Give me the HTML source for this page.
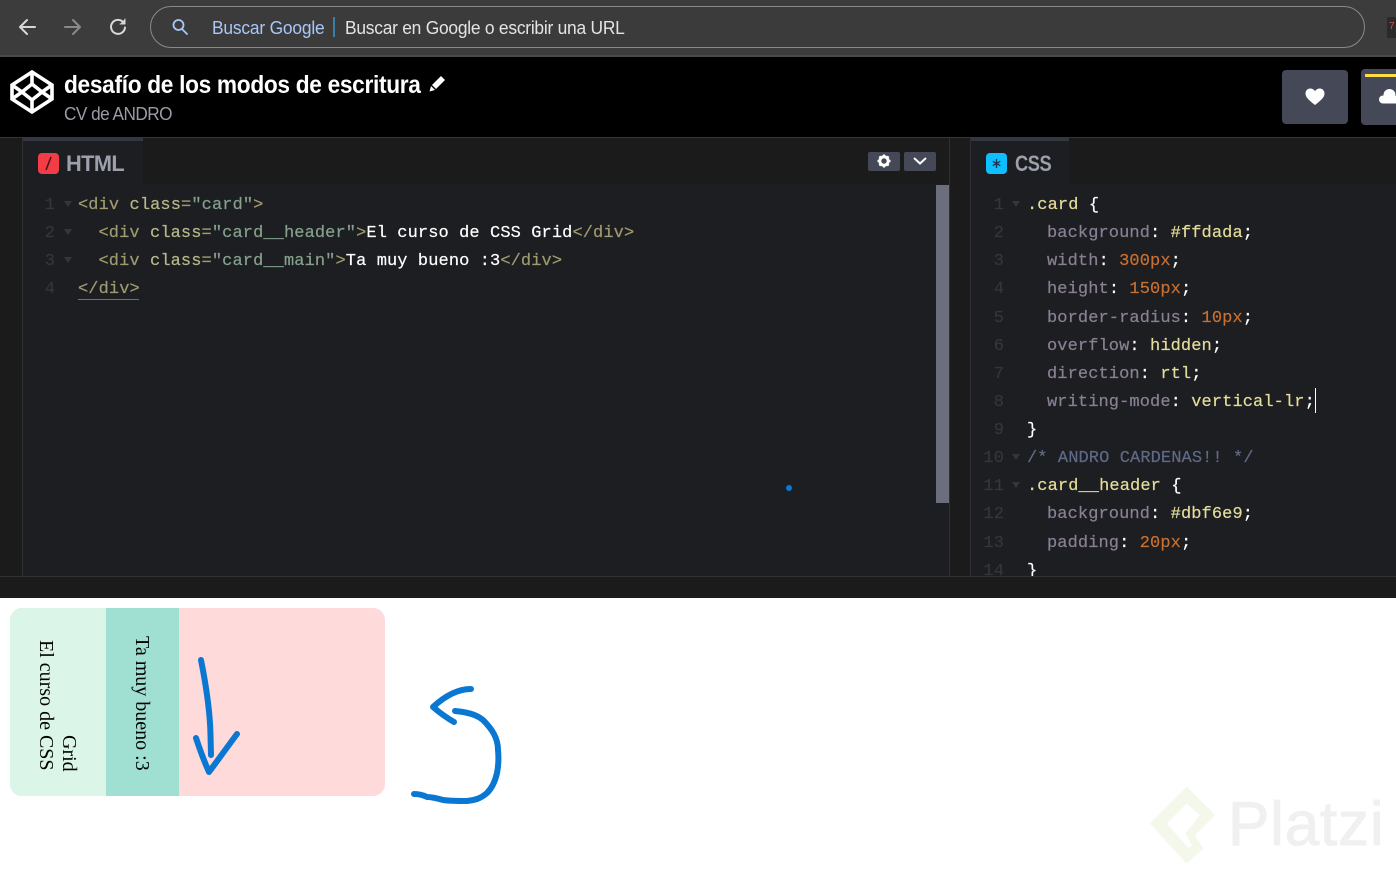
<!DOCTYPE html>
<html><head><meta charset="utf-8"><style>
*{box-sizing:border-box}
html,body{margin:0;padding:0;width:1396px;height:873px;overflow:hidden;background:#fff}
.a{position:absolute}
.t{position:absolute;white-space:pre;font-family:"Liberation Sans",sans-serif;transform-origin:left center}
.c{position:absolute;white-space:pre;font-family:"Liberation Mono",monospace;font-size:17px;line-height:20px;color:#fff;letter-spacing:.1px;-webkit-text-stroke:.2px}
.n{color:#34363c;text-align:right;width:30px}
.f{position:absolute;width:0;height:0;border-left:4px solid transparent;border-right:4px solid transparent;border-top:6px solid #34363c}
.s{position:absolute;white-space:pre;writing-mode:vertical-lr;font-family:'Liberation Serif',serif;font-size:20px;line-height:23px;color:#000}
.g{color:#9f9a6f}.o{color:#b8b88a}.q{color:#85a08c}.u{color:#8a8094}.y{color:#e4dc9a}.r{color:#c9702f}.m{color:#5f6a88}
</style></head><body>
<div class="a" style="left:0;top:0;width:1396px;height:56px;background:#3c3c3c"></div>
<div class="a" style="left:0;top:55px;width:1396px;height:2px;background:#4a4a4a"></div>
<svg class="a" style="left:0;top:0" width="140" height="56" fill="none" stroke-linecap="round" stroke-linejoin="round"><path d="M35 27H21M27 20l-7 7 7 7" stroke="#d8d8d8" stroke-width="2"/><path d="M65 27h14M73 20l7 7-7 7" stroke="#8a8a8a" stroke-width="2"/><path d="M123.500 22.500a7 7 0 1 0 1.500 5" stroke="#d8d8d8" stroke-width="2"/><path d="M125 19v5h-5" fill="#d8d8d8" stroke="#d8d8d8" stroke-width="1"/></svg>
<div class="a" style="left:150px;top:6px;width:1215px;height:42px;border:1.500px solid #8a8a8a;border-radius:21px;background:#3b3b3b"></div>
<svg class="a" style="left:170px;top:17px" width="20" height="20" fill="none" stroke="#a8c7fa" stroke-width="1.800"><circle cx="8.500" cy="8" r="5"/><path d="M12 12l5.500 5.500"/></svg>
<div class="t" style="left:212px;top:17px;font-size:18px;line-height:22px;color:#a8c7fa;letter-spacing:-.2px;transform:scaleX(.966)">Buscar Google</div>
<div class="a" style="left:333px;top:17px;width:1.500px;height:20px;background:#3b7ea8"></div>
<div class="t" style="left:345px;top:17px;font-size:18px;line-height:22px;color:#e4e4e4;letter-spacing:-.25px;transform:scaleX(.966)">Buscar en Google o escribir una URL</div>
<div class="a" style="left:1387px;top:17px;width:9px;height:21px;background:#2a2a2a"></div>
<div class="t" style="left:1389px;top:21px;font-size:10px;line-height:12px;color:#d05050">7</div>

<div class="a" style="left:0;top:57px;width:1396px;height:80px;background:#000"></div>
<svg class="a" style="left:9px;top:69px" width="46" height="46" fill="none" stroke="#fff" stroke-width="3.600" stroke-linejoin="miter"><path d="M23 3 43 16V30L23 43 3 30V16Z"/><path d="M23 3V15L33 23 23 31V43M3 16 13 23 23 15M43 16 33 23M3 30 13 23 23 31M43 30 33 23"/></svg>
<div class="t" style="left:64px;top:70px;font-size:25px;line-height:30px;font-weight:700;color:#fff;letter-spacing:-.35px;transform:scaleX(.908)">desafío de los modos de escritura</div>
<svg class="a" style="left:427px;top:74px" width="20" height="20"><path d="M14 2l4 4-9 9-4-4zM4 12l4 4-5.500 1.500z" fill="#fff"/></svg>
<div class="t" style="left:64px;top:103px;font-size:18px;line-height:22px;color:#9a9ca5;letter-spacing:-.55px;transform:scaleX(.956)">CV de ANDRO</div>
<div class="a" style="left:1282px;top:70px;width:66px;height:54px;background:#444857;border-radius:4px"></div>
<svg class="a" style="left:1304px;top:87px" width="22" height="20"><path d="M11 18C4 12.500 1.500 10 1.500 6.500 1.500 3.500 3.700 1.500 6.200 1.500 8.200 1.500 10 2.500 11 4.200 12 2.500 13.800 1.500 15.800 1.500 18.300 1.500 20.500 3.500 20.500 6.500 20.500 10 18 12.500 11 18Z" fill="#fff"/></svg>
<div class="a" style="left:1361px;top:69px;width:40px;height:56px;background:#444857;border-radius:4px"></div>
<div class="a" style="left:1365px;top:74px;width:31px;height:3px;background:#ffdd40"></div>
<svg class="a" style="left:1378px;top:87px" width="18" height="18" fill="#fff"><circle cx="5" cy="12.500" r="4"/><circle cx="11.500" cy="8" r="6"/><rect x="5" y="9" width="13" height="7.500"/></svg>

<div class="a" style="left:0;top:137px;width:1396px;height:461px;background:#1d1e22"></div>
<div class="a" style="left:0;top:137px;width:1396px;height:1px;background:#34363c"></div>
<div class="a" style="left:0;top:138px;width:22px;height:438px;background:#1b1b1b"></div>
<div class="a" style="left:22px;top:138px;width:1px;height:438px;background:#2f3034"></div>
<div class="a" style="left:23px;top:138px;width:926px;height:46px;background:#1b1b1c"></div>
<div class="a" style="left:23px;top:138px;width:120px;height:46px;background:#1d1e22"></div>
<div class="a" style="left:23px;top:138px;width:120px;height:3px;background:#343640"></div>
<div class="a" style="left:38px;top:153px;width:21px;height:21px;background:#f33c45;border-radius:4px"></div>
<svg class="a" style="left:38px;top:153px" width="21" height="21"><path d="M8 17 13 4" stroke="#40161a" stroke-width="1.500"/></svg>
<div class="t" style="left:66px;top:150px;font-size:22px;line-height:27px;font-weight:700;color:#9ca0ac;letter-spacing:-.6px;transform:scaleX(.99)">HTML</div>
<div class="a" style="left:868px;top:152px;width:32px;height:19px;background:#444857;border-radius:2px"></div>
<div class="a" style="left:904px;top:152px;width:32px;height:19px;background:#444857;border-radius:2px"></div>
<svg class="a" style="left:876px;top:153px" width="16" height="16"><circle cx="8" cy="8" r="4.200" fill="none" stroke="#fff" stroke-width="3"/><path d="M8 1.500v3M8 11.500v3M1.500 8h3M11.500 8h3M3.400 3.400l2 2M10.600 10.600l2 2M3.400 12.600l2-2M10.600 5.400l2-2" stroke="#fff" stroke-width="2.200"/></svg>
<svg class="a" style="left:911px;top:154px" width="18" height="14" fill="none"><path d="M3 4l6 5.500L15 4" stroke="#fff" stroke-width="2"/></svg>
<div class="a" style="left:936px;top:185px;width:13px;height:318px;background:#6b6e7c"></div>
<div class="a" style="left:949px;top:138px;width:1px;height:438px;background:#2f3034"></div>
<div class="a" style="left:950px;top:138px;width:20px;height:438px;background:#1b1b1b"></div>
<div class="a" style="left:970px;top:138px;width:1px;height:438px;background:#2f3034"></div>
<div class="a" style="left:971px;top:138px;width:425px;height:46px;background:#1b1b1c"></div>
<div class="a" style="left:971px;top:138px;width:98px;height:46px;background:#1d1e22"></div>
<div class="a" style="left:971px;top:138px;width:98px;height:3px;background:#343640"></div>
<div class="a" style="left:986px;top:153px;width:21px;height:21px;background:#0ebeff;border-radius:4px"></div>
<svg class="a" style="left:986px;top:153px" width="21" height="21" stroke="#123a50" stroke-width="1.400"><path d="M10.500 6v9M6.700 8.300l7.600 4.400M6.700 12.700l7.600-4.400"/></svg>
<div class="t" style="left:1015px;top:150px;font-size:22px;line-height:27px;font-weight:700;color:#9ca0ac;letter-spacing:-.5px;transform:scaleX(.83)">CSS</div>
<div class="a" style="left:786px;top:485px;width:6px;height:6px;border-radius:50%;background:#0a78d4"></div>

<div class="c n" style="left:25px;top:196px">1</div><div class="f" style="left:64px;top:201px"></div>
<div class="c n" style="left:25px;top:224px">2</div><div class="f" style="left:64px;top:229px"></div>
<div class="c n" style="left:25px;top:252px">3</div><div class="f" style="left:64px;top:257px"></div>
<div class="c n" style="left:25px;top:280px">4</div>
<div class="c" style="left:78px;top:196px"><span class="g">&lt;div</span> <span class="o">class</span><span class="g">=</span><span class="q">"card"</span><span class="g">&gt;</span></div>
<div class="c" style="left:98.500px;top:224px"><span class="g">&lt;div</span> <span class="o">class</span><span class="g">=</span><span class="q">"card__header"</span><span class="g">&gt;</span>El curso de CSS Grid<span class="g">&lt;/div&gt;</span></div>
<div class="c" style="left:98.500px;top:252px"><span class="g">&lt;div</span> <span class="o">class</span><span class="g">=</span><span class="q">"card__main"</span><span class="g">&gt;</span>Ta muy bueno :3<span class="g">&lt;/div&gt;</span></div>
<div class="c" style="left:78px;top:280px"><span class="g">&lt;/div&gt;</span></div>
<div class="a" style="left:78px;top:299px;width:61px;height:1px;background:#6b6e7c"></div>

<div class="a" style="left:971px;top:184px;width:425px;height:392px;overflow:hidden">
<div class="c n" style="left:3px;top:12px">1</div><div class="f" style="left:41px;top:17px"></div>
<div class="c n" style="left:3px;top:40px">2</div>
<div class="c n" style="left:3px;top:68px">3</div>
<div class="c n" style="left:3px;top:96px">4</div>
<div class="c n" style="left:3px;top:125px">5</div>
<div class="c n" style="left:3px;top:153px">6</div>
<div class="c n" style="left:3px;top:181px">7</div>
<div class="c n" style="left:3px;top:209px">8</div>
<div class="c n" style="left:3px;top:237px">9</div>
<div class="c n" style="left:3px;top:265px">10</div><div class="f" style="left:41px;top:270px"></div>
<div class="c n" style="left:3px;top:293px">11</div><div class="f" style="left:41px;top:298px"></div>
<div class="c n" style="left:3px;top:321px">12</div>
<div class="c n" style="left:3px;top:350px">13</div>
<div class="c n" style="left:3px;top:378px">14</div>
<div class="c" style="left:56px;top:12px"><span class="y">.card</span> {</div>
<div class="c" style="left:76px;top:40px"><span class="u">background</span>: <span class="y">#ffdada</span>;</div>
<div class="c" style="left:76px;top:68px"><span class="u">width</span>: <span class="r">300px</span>;</div>
<div class="c" style="left:76px;top:96px"><span class="u">height</span>: <span class="r">150px</span>;</div>
<div class="c" style="left:76px;top:125px"><span class="u">border-radius</span>: <span class="r">10px</span>;</div>
<div class="c" style="left:76px;top:153px"><span class="u">overflow</span>: <span class="y">hidden</span>;</div>
<div class="c" style="left:76px;top:181px"><span class="u">direction</span>: <span class="y">rtl</span>;</div>
<div class="c" style="left:76px;top:209px"><span class="u">writing-mode</span>: <span class="y">vertical-lr</span>;</div>
<div class="a" style="left:344px;top:204px;width:1px;height:25px;background:#fff"></div>
<div class="c" style="left:56px;top:237px">}</div>
<div class="c m" style="left:56px;top:265px">/* ANDRO CARDENAS!! */</div>
<div class="c" style="left:56px;top:293px"><span class="y">.card__header</span> {</div>
<div class="c" style="left:76px;top:321px"><span class="u">background</span>: <span class="y">#dbf6e9</span>;</div>
<div class="c" style="left:76px;top:350px"><span class="u">padding</span>: <span class="r">20px</span>;</div>
<div class="c" style="left:56px;top:378px">}</div>
</div>

<div class="a" style="left:0;top:576px;width:1396px;height:22px;background:#1b1b1b;border-top:1px solid #2f3034"></div>

<div class="a" style="left:10px;top:608px;width:375px;height:188px;border-radius:12px;overflow:hidden;background:#ffdada">
<div class="a" style="left:0;top:0;width:96px;height:188px;background:#dbf6e9"></div>
<div class="a" style="left:96px;top:0;width:73px;height:188px;background:#a0e0d3"></div>
</div>
<div class="s" style="left:34px;top:640px">El curso de CSS</div>
<div class="s" style="left:57px;top:735px">Grid</div>
<div class="s" style="left:130px;top:636px">Ta muy bueno :3</div>

<svg class="a" style="left:0;top:600px" width="520" height="220" fill="none" stroke="#0a78d2" stroke-width="6" stroke-linecap="round" stroke-linejoin="round">
<path d="M201 60C206 85 210 110 210.500 135L211 155"/>
<path d="M196 138C200 150 204 161 209 172 218 160 228 146 237 134"/>
<path d="M471 89C458 89 446 95 433 107 440 113 447 118 454 122"/>
<path d="M455 111C466 112 476 114 483 120 492 129 498 138 498 150 499 160 498 168 497 173 495 182 492 188 487 193 480 199 475 200 467 201 458 201 450 201 443 200 436 198 430 197 427 197 423 195 418 194 414 194"/>
</svg>

<svg class="a" style="left:1130px;top:770px" width="266" height="103" viewBox="0 0 798 309"><path fill-rule="evenodd" fill="#f3f8ea" stroke="#f3f8ea" stroke-width="8" stroke-linejoin="round" d="M170 55 250 135 190 195 215 235 170 275 65 160ZM170 95 105 160 175 240 190 228 172 190 215 135Z"/></svg>
<div class="t" style="left:1228px;top:790px;font-size:62px;line-height:70px;color:#f0f0f0;letter-spacing:.8px;-webkit-text-stroke:1px #f0f0f0">Platzi</div>
</body></html>
